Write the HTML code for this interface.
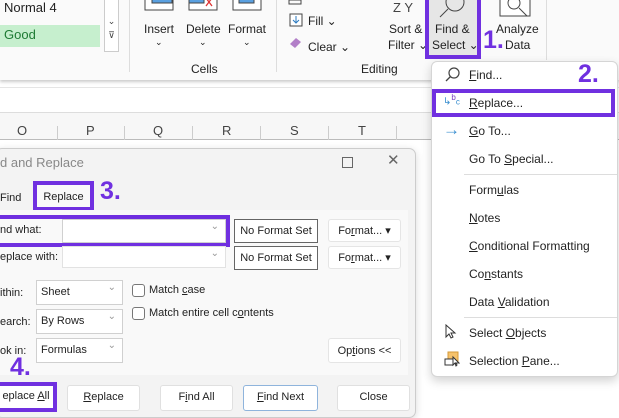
<!DOCTYPE html>
<html><head><meta charset="utf-8"><style>
*{margin:0;padding:0;box-sizing:border-box}
body{width:619px;height:406px;overflow:hidden;background:#fff;font-family:"Liberation Sans",sans-serif;font-size:12px;color:#222;position:relative}
.a{position:absolute;white-space:nowrap}
.p{color:#7030e0;font-weight:bold;font-size:25px}
.pb{position:absolute;border:4px solid #7030e0}
.btn{position:absolute;background:#fff;border:1px solid #ccc;border-radius:3px;text-align:center;font-size:11px;line-height:22px}
.cmb{position:absolute;background:#fff;border:1px solid #d0d0d0;font-size:11px;line-height:22px;padding-left:4px}
.cmb:after{content:"⌄";position:absolute;right:6px;top:-4px;color:#999;font-size:10px}
.mi{position:absolute;left:469px;font-size:12px}
u{text-decoration:underline}
</style></head><body>
<!-- ribbon -->
<div class="a" style="left:0;top:0;width:619px;height:80px;background:#fafafa;box-shadow:0 2px 3px #ccc"></div>
<div class="a" style="left:4px;top:0;font-size:13px">Normal 4</div>
<div class="a" style="left:0;top:25px;width:100px;height:22px;background:#c6efce;color:#1e7b34;font-size:13px;padding:2px 4px">Good</div>
<div class="a" style="left:104px;top:0;width:15px;height:52px;border:1px solid #ccc;border-top:none;background:#fff;font-size:9px;text-align:center;line-height:14px;color:#444"><br>⌄<br>⊽</div>
<div class="a" style="left:129px;top:0;width:1px;height:72px;background:#ddd"></div>
<svg class="a" style="left:140px;top:0" width="135" height="14"><g fill="#5aa0e0" stroke="#444" stroke-width="1"><rect x="5" y="-6" width="28" height="16" fill="#fff"/><rect x="12" y="-6" width="20" height="9"/><rect x="49" y="-6" width="28" height="16" fill="#fff"/><rect x="49" y="-6" width="15" height="9"/><rect x="93" y="-6" width="28" height="16" fill="#fff"/><rect x="99" y="-6" width="15" height="9"/></g><path d="M66 -2l6 8M72 -2l-6 8" stroke="#d33" stroke-width="1.3"/></svg>
<div class="a" style="left:144px;top:22px">Insert</div><div class="a" style="left:155px;top:37px;font-size:9px">⌄</div>
<div class="a" style="left:186px;top:22px">Delete</div><div class="a" style="left:199px;top:37px;font-size:9px">⌄</div>
<div class="a" style="left:228px;top:22px">Format</div><div class="a" style="left:243px;top:37px;font-size:9px">⌄</div>
<div class="a" style="left:191px;top:62px">Cells</div>
<div class="a" style="left:276px;top:0;width:1px;height:72px;background:#ddd"></div>
<svg class="a" style="left:288px;top:0" width="20" height="50"><rect x="1" y="0" width="12" height="4" fill="none" stroke="#444"/><rect x="2" y="14" width="12" height="12" fill="#fff" stroke="#444"/><path d="M8 16v7M5 20l3 3 3-3" stroke="#2a7ac0" fill="none"/><path d="M2 44l6-6 5 4-6 6z" fill="#b27fc8"/></svg>
<div class="a" style="left:308px;top:14px">Fill ⌄</div>
<div class="a" style="left:308px;top:40px">Clear ⌄</div>
<div class="a" style="left:361px;top:62px">Editing</div>
<div class="a" style="left:393px;top:0;font-size:13px;color:#444">Z Y</div>
<div class="a" style="left:389px;top:22px">Sort &amp;</div>
<div class="a" style="left:388px;top:38px">Filter ⌄</div>
<div class="a" style="left:426px;top:0;width:52px;height:58px;background:#e6e6e6"></div>
<svg class="a" style="left:430px;top:0" width="40" height="20"><circle cx="25" cy="2" r="9" fill="none" stroke="#444"/><path d="M18 9l-8 8" stroke="#444"/></svg>
<div class="a" style="left:435px;top:22px">Find &amp;</div>
<div class="a" style="left:432px;top:38px">Select ⌄</div>
<div class="pb" style="left:425px;top:-4px;width:56px;height:63px"></div>
<div class="a p" style="left:483px;top:26px">1.</div>
<svg class="a" style="left:499px;top:0" width="35" height="20"><rect x="1" y="-2" width="30" height="18" fill="#fff" stroke="#444"/><circle cx="15" cy="3" r="6" fill="#fff" stroke="#444"/><path d="M20 8l8 8" stroke="#444"/></svg>
<div class="a" style="left:496px;top:22px">Analyze</div>
<div class="a" style="left:505px;top:38px">Data</div>
<div class="a" style="left:546px;top:0;width:1px;height:60px;background:#ddd"></div>
<!-- formula area & headers -->
<div class="a" style="left:0;top:87px;width:619px;height:1px;background:#e5e5e5"></div>
<div class="a" style="left:0;top:112px;width:619px;height:1px;background:#ddd"></div>
<div class="a" style="left:0;top:113px;width:619px;height:27px;background:#f7f7f7;border-bottom:1px solid #bbb"></div>
<div class="a" style="left:17px;top:123px;font-size:13px;color:#444">O</div>
<div class="a" style="left:86px;top:123px;font-size:13px;color:#444">P</div>
<div class="a" style="left:153px;top:123px;font-size:13px;color:#444">Q</div>
<div class="a" style="left:222px;top:123px;font-size:13px;color:#444">R</div>
<div class="a" style="left:290px;top:123px;font-size:13px;color:#444">S</div>
<div class="a" style="left:358px;top:123px;font-size:13px;color:#444">T</div>
<div class="a" style="left:57px;top:126px;width:1px;height:14px;background:#ccc"></div>
<div class="a" style="left:124px;top:126px;width:1px;height:14px;background:#ccc"></div>
<div class="a" style="left:192px;top:126px;width:1px;height:14px;background:#ccc"></div>
<div class="a" style="left:260px;top:126px;width:1px;height:14px;background:#ccc"></div>
<div class="a" style="left:328px;top:126px;width:1px;height:14px;background:#ccc"></div>
<div class="a" style="left:396px;top:126px;width:1px;height:14px;background:#ccc"></div>
<!-- dialog -->
<div class="a" style="left:-5px;top:148px;width:421px;height:270px;background:#f3f3f3;border:1px solid #ccc;border-radius:7px;box-shadow:0 2px 8px rgba(0,0,0,.15)"></div>
<div class="a" style="left:0;top:155px;font-size:13px;color:#888">d and Replace</div>
<div class="a" style="left:342px;top:157px;width:11px;height:11px;border:1px solid #666"></div>
<div class="a" style="left:387px;top:151px;font-size:15px;color:#666">✕</div>
<div class="a" style="left:0;top:192px;font-size:11px">Find</div>
<div class="a" style="left:37px;top:185px;width:53px;height:25px;background:#f9f9f9;font-size:11px;text-align:center;line-height:25px">Replace</div>
<div class="pb" style="left:33px;top:181px;width:61px;height:30px"></div>
<div class="a p" style="left:100px;top:177px">3.</div>
<div class="a" style="left:0;top:210px;width:408px;height:165px;background:#f9f9f9"></div>
<div class="a" style="left:0;top:224px;font-size:11px">nd what:</div>
<div class="cmb" style="left:62px;top:219px;width:164px;height:24px"></div>
<div class="pb" style="left:-4px;top:215px;width:234px;height:32px"></div>
<div class="a" style="left:0;top:251px;font-size:11px">eplace with:</div>
<div class="cmb" style="left:62px;top:246px;width:164px;height:22px;border-color:#e2e2e2"></div>
<div class="btn" style="left:234px;top:219px;width:84px;height:24px;border-color:#666;border-radius:0">No Format Set</div>
<div class="btn" style="left:234px;top:246px;width:84px;height:24px;border-color:#666;border-radius:0">No Format Set</div>
<div class="btn" style="left:328px;top:219px;width:73px;height:23px;border-color:#e5e5e5">Fo<u>r</u>mat... ▾</div>
<div class="btn" style="left:328px;top:246px;width:73px;height:23px;border-color:#e5e5e5">Fo<u>r</u>mat... ▾</div>
<div class="a" style="left:0;top:287px;font-size:11px">ithin:</div>
<div class="a" style="left:0;top:316px;font-size:11px">earch:</div>
<div class="a" style="left:0;top:345px;font-size:11px">ok in:</div>
<div class="cmb" style="left:36px;top:280px;width:87px;height:25px">Sheet</div>
<div class="cmb" style="left:36px;top:309px;width:87px;height:25px">By Rows</div>
<div class="cmb" style="left:36px;top:338px;width:87px;height:25px">Formulas</div>
<div class="a" style="left:132px;top:284px;width:13px;height:13px;border:1px solid #777;border-radius:3px;background:#fff"></div>
<div class="a" style="left:149px;top:284px;font-size:11px">Match <u>c</u>ase</div>
<div class="a" style="left:132px;top:307px;width:13px;height:13px;border:1px solid #777;border-radius:3px;background:#fff"></div>
<div class="a" style="left:149px;top:307px;font-size:11px">Match entire cell c<u>o</u>ntents</div>
<div class="btn" style="left:328px;top:338px;width:73px;height:25px;line-height:24px;border-color:#e5e5e5">Op<u>t</u>ions &lt;&lt;</div>
<div class="a p" style="left:10px;top:353px">4.</div>
<div class="btn" style="left:-4px;top:385px;width:60px;height:26px;border:none;background:#fff">eplace <u>A</u>ll</div>
<div class="pb" style="left:-4px;top:382px;width:61px;height:30px"></div>
<div class="btn" style="left:67px;top:385px;width:73px;height:26px;border-color:#e0e0e0"><u>R</u>eplace</div>
<div class="btn" style="left:160px;top:385px;width:73px;height:26px;border-color:#e0e0e0">F<u>i</u>nd All</div>
<div class="btn" style="left:243px;top:385px;width:75px;height:26px;border-color:#8fb4dc"><u>F</u>ind Next</div>
<div class="btn" style="left:337px;top:385px;width:73px;height:26px;border-color:#e0e0e0">Close</div>
<!-- menu -->
<div class="a" style="left:431px;top:61px;width:187px;height:316px;background:#fff;border:1px solid #d5d5d5;border-radius:6px;box-shadow:0 4px 10px rgba(0,0,0,.18)"></div>
<svg class="a" style="left:444px;top:66px" width="18" height="18"><circle cx="10" cy="7" r="5" fill="none" stroke="#444" stroke-width="1.2"/><path d="M6.5 10.5L2 15" stroke="#444" stroke-width="1.3"/></svg>
<div class="mi" style="top:68px"><u>F</u>ind...</div>
<div class="a p" style="left:578px;top:60px">2.</div>
<div class="a" style="left:443px;top:93px;color:#3a8fd0;font-size:10px">↳<sup style="font-size:8px;color:#7a3fc0">b</sup><span style="font-size:8px">c</span></div>
<div class="mi" style="top:96px"><u>R</u>eplace...</div>
<div class="pb" style="left:432px;top:89px;width:183px;height:28px"></div>
<div class="a" style="left:443px;top:120px;color:#3a8fd0;font-size:17px">→</div>
<div class="mi" style="top:124px"><u>G</u>o To...</div>
<div class="mi" style="top:152px">Go To <u>S</u>pecial...</div>
<div class="a" style="left:464px;top:174px;width:153px;height:1px;background:#ddd"></div>
<div class="mi" style="top:183px">Form<u>u</u>las</div>
<div class="mi" style="top:211px"><u>N</u>otes</div>
<div class="mi" style="top:239px"><u>C</u>onditional Formatting</div>
<div class="mi" style="top:267px">Co<u>n</u>stants</div>
<div class="mi" style="top:295px">Data <u>V</u>alidation</div>
<div class="a" style="left:464px;top:317px;width:153px;height:1px;background:#ddd"></div>
<svg class="a" style="left:444px;top:324px" width="14" height="16"><path d="M2 1v12l3-3 2 4 2-1-2-4h4z" fill="#fff" stroke="#333"/></svg>
<div class="mi" style="top:326px">Select <u>O</u>bjects</div>
<svg class="a" style="left:444px;top:351px" width="16" height="16"><rect x="4" y="1" width="10" height="9" fill="#f6c26b" stroke="#d49a3a"/><rect x="1" y="8" width="8" height="6" fill="#fff" stroke="#333"/><path d="M9 6v8l2-2 1 3 1-1-1-2h3z" fill="#fff" stroke="#333"/></svg>
<div class="mi" style="top:354px">Selection <u>P</u>ane...</div>
</body></html>
